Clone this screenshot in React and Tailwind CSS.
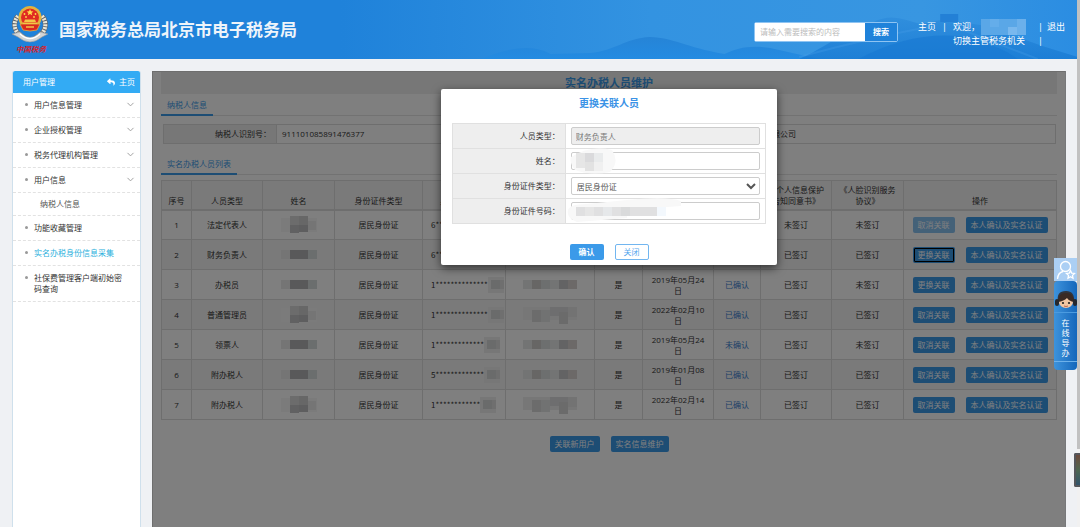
import React, { useState } from 'react';
import { ChevronDown } from 'lucide-react';
import { FaReply } from 'react-icons/fa';

const menuItems = [
  { label: '用户信息管理', expandable: true },
  { label: '企业授权管理', expandable: true },
  { label: '税务代理机构管理', expandable: true },
  { label: '用户信息', expandable: true },
  { label: '纳税人信息', child: true },
  { label: '功能收藏管理' },
  { label: '实名办税身份信息采集', active: true },
  { label: '社保费管理客户端初始密码查询' },
];

// Masked areas: [x, y, width, height, colour]
const nameBar = [
  [0, 4, 9, 9, '#eaeaea'], [9, 4, 18, 9, '#b2b2b4'], [27, 4, 9, 9, '#d6dcdc'],
];
const nameBlock = [
  [0, 2, 36, 14, '#f6f6f6'], [9, 0, 9, 9, '#d8d8d8'], [18, 0, 9, 9, '#cecece'],
  [9, 9, 9, 8, '#c2c2c4'], [18, 9, 9, 7, '#bdbdbf'], [27, 5, 8, 9, '#ebebeb'],
];
const idBlock = [
  [0, 1, 16, 16, '#eeeeee'], [3, 4, 9, 9, '#d4d6d6'], [12, 4, 4, 9, '#dedede'],
];
const phoneBar = [
  [0, 4, 54, 9, '#e6e8e8'], [9, 4, 9, 9, '#cfcdcb'], [18, 4, 9, 9, '#dadfdf'],
  [36, 4, 9, 9, '#c6c6c8'], [45, 4, 9, 9, '#d8d3d1'],
];
const phoneBlock = [
  [0, 1, 54, 13, '#efefef'], [9, 4, 9, 12, '#d9d9d9'], [18, 4, 9, 12, '#e3e5e5'],
  [27, 1, 18, 9, '#dcdcde'], [36, 6, 9, 12, '#d6d6d6'], [45, 1, 9, 10, '#e6e6e6'],
];

const people = [
  { type: '法定代表人', name: nameBlock, id: '6**************', phone: phoneBar, date: '2019年05月24日', status: '已确认', info: '未签订', face: '未签订', action: '取消关联', disabled: true },
  { type: '财务负责人', name: nameBar, id: '6**************', phone: phoneBar, date: '2019年05月24日', status: '已确认', info: '已签订', face: '已签订', action: '更换关联', focused: true },
  { type: '办税员', name: nameBar, id: '1**************', phone: phoneBar, date: '2019年05月24日', status: '已确认', info: '已签订', face: '未签订', action: '更换关联' },
  { type: '普通管理员', name: nameBlock, id: '1**************', phone: phoneBlock, date: '2022年02月10日', status: '已确认', info: '已签订', face: '已签订', action: '取消关联' },
  { type: '领票人', name: nameBar, id: '1*************', phone: phoneBar, date: '2019年05月24日', status: '未确认', info: '已签订', face: '未签订', action: '取消关联' },
  { type: '附办税人', name: nameBar, id: '5*************', phone: phoneBar, date: '2019年01月08日', status: '已确认', info: '已签订', face: '已签订', action: '取消关联' },
  { type: '附办税人', name: nameBlock, id: '1************', phone: phoneBlock, date: '2022年02月14日', status: '已确认', info: '已签订', face: '已签订', action: '取消关联' },
];

const Mosaic = ({ cells, width }) => (
  <svg width={width} height="18" viewBox={`0 0 ${width} 18`} className="shrink-0" aria-hidden="true">
    {cells.map(([x, y, w, h, fill], i) => (
      <rect key={i} x={x} y={y} width={w} height={h} fill={fill} />
    ))}
  </svg>
);

const Emblem = () => (
  <svg width="38" height="50" viewBox="0 0 38 50" className="shrink-0" aria-hidden="true">
    {/* wheat wreath */}
    <path d="M7 11 C1 18 3 29 14 33" fill="none" stroke="#61656a" strokeWidth="5" />
    <path d="M31 11 C37 18 35 29 24 33" fill="none" stroke="#61656a" strokeWidth="5" />
    <path d="M7 11 C1 18 3 29 14 33" fill="none" stroke="#e9e6d8" strokeWidth="4" strokeDasharray="2 1" />
    <path d="M31 11 C37 18 35 29 24 33" fill="none" stroke="#e9e6d8" strokeWidth="4" strokeDasharray="2 1" />
    <path d="M1 29 L9 27 Q19 38 29 27 L37 29 L31 32 Q25 37 19 37 Q13 37 7 32 Z" fill="#d3d5d6" stroke="#8d9499" strokeWidth=".6" />
    <path d="M9 29 Q19 38 29 29" fill="none" stroke="#fff" strokeWidth="1.2" />
    {/* national emblem */}
    <circle cx="19" cy="12.500" r="11.500" fill="#e3b33d" />
    <circle cx="19" cy="12.500" r="9" fill="#e02a22" />
    <path d="M9 19 H29 L26 25 Q19 27 12 25 Z" fill="#d9271f" stroke="#e3b33d" strokeWidth=".8" />
    <path d="M19 4 l1 2.200 2.400 .2 -1.800 1.500 .6 2.300 -2.200 -1.300 -2.200 1.300 .6 -2.300 -1.800 -1.500 2.400 -.2 Z" fill="#ffd84a" />
    <circle cx="13.500" cy="9" r=".9" fill="#ffd84a" />
    <circle cx="15" cy="12" r=".9" fill="#ffd84a" />
    <circle cx="24.500" cy="9" r=".9" fill="#ffd84a" />
    <circle cx="23" cy="12" r=".9" fill="#ffd84a" />
    <path d="M13 17 H25 L24 14.500 H14 Z M12 17.500 H26 V19 H12 Z" fill="#f2c547" />
    <path d="M15 22 H23" stroke="#f2c547" strokeWidth="1.500" />
    <text x="5" y="47" fontSize="7.500" fontStyle="italic" fontWeight="700" fill="#d8232a" fontFamily="Noto Sans CJK SC, sans-serif">中国税务</text>
  </svg>
);

const HeaderScenery = () => (
  <svg viewBox="0 0 780 59" preserveAspectRatio="none" className="absolute inset-y-0 right-0 h-full w-[72%]" aria-hidden="true">
    <defs>
      <linearGradient id="sky" x1="0" x2="1">
        <stop offset="0.050" stopColor="#1f82da" />
        <stop offset="0.450" stopColor="#3393e1" />
        <stop offset="0.800" stopColor="#3896e1" />
        <stop offset="1" stopColor="#2b8de2" />
      </linearGradient>
      <linearGradient id="hill" x1="0" x2="0" y1="0" y2="1">
        <stop offset="0" stopColor="#2684d7" />
        <stop offset="1" stopColor="#238be2" />
      </linearGradient>
      <linearGradient id="mount" x1="0" x2="0" y1="0" y2="1">
        <stop offset="0" stopColor="#308edd" />
        <stop offset="1" stopColor="#187ad3" />
      </linearGradient>
    </defs>
    <rect width="780" height="59" fill="url(#sky)" />
    <path d="M180 59 Q225 40 250 54 L290 53 C315 51 325 38 350 37 C375 38 385 47 425 54 C440 47 455 44 480 50 L520 59 Z" fill="url(#hill)" />
    <path d="M500 59 C530 46 545 30 575 22 Q590 14 608 20 L622 24 L642 20 V14 H660 V22 L690 26 Q735 44 780 57 V59 Z" fill="url(#mount)" opacity=".8" />
    <path d="M642 14 H660 V22 H642 Z" fill="#2380d6" />
    <path d="M500 57 Q570 38 630 27 M660 28 Q690 40 740 59" fill="none" stroke="#4aa0e8" strokeWidth="2" opacity=".3" />
    <path d="M560 59 Q610 32 660 36 Q700 44 720 59 Z" fill="#1878d2" opacity=".6" />
  </svg>
);

const Header = () => (
  <header className="relative flex h-[59px] items-center bg-[#1f82da] pr-3 pl-[11px] text-white">
    <HeaderScenery />
    <div className="relative flex items-center gap-[10px]">
      <Emblem />
      <h1 className="text-[17px] leading-6 font-bold text-[#eef4fa]">国家税务总局北京市电子税务局</h1>
    </div>
    <form className="relative mt-1 ml-auto flex h-5 w-[144px] rounded-xs border border-[#8fc4f2]" onSubmit={(e) => e.preventDefault()}>
      <input
        type="text"
        aria-label="搜索内容"
        placeholder="请输入需要搜索的内容"
        className="min-w-0 flex-1 bg-white px-[5px] text-[8px] text-gray-700 outline-none placeholder:text-[#bbb]"
      />
      <button type="submit" className="w-8 bg-[#1f82da] text-[8px] font-bold">搜索</button>
    </form>
    <nav className="relative mt-2 ml-5 flex gap-[6px] text-[9px] leading-[14px]">
      <a href="#home">主页</a>
      <span>|</span>
      <div>
        <div className="flex h-[14px] items-center gap-px">
          欢迎，
          <svg width="45" height="16" viewBox="0 0 45 16" aria-hidden="true">
            <rect width="45" height="16" fill="#5aa7e7" />
            <rect x="9" width="9" height="8" fill="#64adea" />
            <rect x="27" y="8" width="9" height="8" fill="#79b8ee" />
            <rect x="36" width="9" height="16" fill="#6bb0eb" />
          </svg>
        </div>
        <a href="#switch" className="block">切换主管税务机关</a>
      </div>
      <div className="ml-[6px] grid grid-cols-[auto_auto] gap-x-1">
        <span>|</span>
        <a href="#logout">退出</a>
        <span>|</span>
      </div>
    </nav>
  </header>
);

const Sidebar = () => (
  <aside className="w-[129px] shrink-0 rounded-t-xs border-x border-[#cfe0ec] bg-white text-[8px]">
    <div className="flex h-[22px] items-center justify-between rounded-t-xs bg-[#33abf4] pr-[5px] pl-[10px] text-white">
      <span>用户管理</span>
      <a href="#home" className="flex items-center gap-1">
        <FaReply size={8} /> 主页
      </a>
    </div>
    <ul className="leading-[11px] text-[#333]">
      {menuItems.map((item) => (
        <li key={item.label} className="border-b border-dashed border-[#e2e2e2]">
          {item.child ? (
            <a href="#menu" className="block pt-[5px] pb-[6px] pl-[27px] text-[#555]">{item.label}</a>
          ) : (
            <a href="#menu" className={`flex py-[6px] pr-1 pl-3 ${item.active ? 'text-[#2bb0dd]' : ''}`}>
              <span className="mt-1 mr-[6px] size-[3px] shrink-0 rounded-full bg-[#999]" />
              <span className="flex-1 pr-2 pb-px">{item.label}</span>
              {item.expandable && <ChevronDown size={11} strokeWidth={2} className="text-[#999]" />}
            </a>
          )}
        </li>
      ))}
    </ul>
  </aside>
);

const Button = ({ children, className = '', ...props }) => (
  <button type="button" className={`h-4 rounded-xs bg-[#3b9ae9] px-[5px] text-[8px] leading-4 whitespace-nowrap text-white ${className}`} {...props}>
    {children}
  </button>
);

const SectionTab = ({ children }) => (
  <div className="flex h-[22px] border-b border-[#e4e4e4]">
    <h3 className="-mb-px border-b-2 border-[#3b9ae9] px-[6px] text-[8px] leading-[22px] text-[#3b9ae9]">{children}</h3>
  </div>
);

const TaxpayerTable = () => (
  <table className="w-full table-fixed border-collapse text-left text-[8px] leading-[18px] text-[#333]">
    <colgroup>
      <col className="w-[113px]" />
      <col className="w-[332px]" />
      <col className="w-[110px]" />
      <col className="w-[337px]" />
    </colgroup>
    <tbody>
      <tr>
        <th className="border border-[#dcdcdc] bg-[#eee] pr-[5px] text-right font-normal">纳税人识别号：</th>
        <td className="border border-[#dcdcdc] pl-[5px]">911101085891476377</td>
        <th className="border border-[#dcdcdc] bg-[#eee] pr-[5px] text-right font-normal">纳税人名称：</th>
        <td className="border border-[#dcdcdc] pl-[5px]">北京市某某有限公司</td>
      </tr>
    </tbody>
  </table>
);

const headings = ['序号', '人员类型', '姓名', '身份证件类型', '身份证件号码', '手机号码', '是否有效', '有效期起', '确认状态', '《个人信息保护告知同意书》', '《人脸识别服务协议》', '操作'];

const PeopleTable = ({ onReplace }) => (
  <table className="w-full table-fixed border-collapse text-center text-[8px] leading-[11px] text-[#333]">
    <colgroup>
      <col className="w-[30px]" />
      <col className="w-[71px]" />
      <col className="w-[72px]" />
      <col className="w-[88px]" />
      <col className="w-[83px]" />
      <col className="w-[89px]" />
      <col className="w-[48px]" />
      <col className="w-[71px]" />
      <col className="w-[47px]" />
      <col className="w-[71px]" />
      <col className="w-[72px]" />
      <col className="w-[153px]" />
    </colgroup>
    <thead>
      <tr className="h-[29px] bg-[#f5f5f5]">
        {headings.map((h) => (
          <th key={h} className="border border-b-2 border-[#ddd] px-[6px] pb-[3px] align-bottom font-normal first:px-0">{h}</th>
        ))}
      </tr>
    </thead>
    <tbody className="[&_td]:border [&_td]:border-[#ddd]">
      {people.map((p, i) => (
        <tr key={i} className="h-[30px] even:bg-[#f4f4f4]">
          <td>{i + 1}</td>
          <td>{p.type}</td>
          <td><div className="flex justify-center"><Mosaic cells={p.name} width={36} /></div></td>
          <td>居民身份证</td>
          <td>
            <div className="flex items-center overflow-hidden pl-2 font-['Noto_Sans_CJK_SC',sans-serif]">
              {p.id}
              <Mosaic cells={idBlock} width={16} />
            </div>
          </td>
          <td><div className="flex justify-center"><Mosaic cells={p.phone} width={54} /></div></td>
          <td>是</td>
          <td className="px-[6px]">{p.date}</td>
          <td className="text-[#3b7fd0]">{p.status}</td>
          <td>{p.info}</td>
          <td>{p.face}</td>
          <td>
            <div className="flex justify-center gap-[11px]">
              <Button
                disabled={p.disabled}
                onClick={onReplace}
                className={`${p.disabled ? 'opacity-60' : ''} ${p.focused ? 'outline-1 -outline-offset-2 outline-black' : ''}`}
              >
                {p.action}
              </Button>
              <Button>本人确认及实名认证</Button>
            </div>
          </td>
        </tr>
      ))}
    </tbody>
  </table>
);

const FormRow = ({ id, label, children }) => (
  <tr>
    <th className="w-[36%] border border-[#e0e0e0] bg-[#eee] pr-[5px] text-right font-normal">
      <label htmlFor={id}>{label}</label>
    </th>
    <td className="border border-[#e0e0e0] px-[5px] py-[3px]">
      <div className="relative flex">{children}</div>
    </td>
  </tr>
);

const field = 'h-[18px] w-full rounded-xs border border-[#ccc] text-[8px] text-[#555]';

const ReplaceDialog = ({ onClose }) => (
  <div role="dialog" aria-labelledby="dialog-title" className="w-[336px] rounded-xs bg-white px-[11px] pt-[7px] pb-[5px] shadow-[0_3px_10px_rgba(0,0,0,0.6)]">
    <h2 id="dialog-title" className="text-center text-[10px] leading-[14px] font-bold text-[#3b93e6]">更换关联人员</h2>
    <table className="mt-[13px] w-full border-collapse text-[8px] text-[#333]">
      <tbody>
        <FormRow id="person-type" label="人员类型：">
          <input id="person-type" type="text" disabled defaultValue="财务负责人" className={`${field} bg-[#eee] px-1 text-[#777]`} />
        </FormRow>
        <FormRow id="person-name" label="姓名：">
          <input id="person-name" type="text" className={`${field} px-1`} />
          <svg width="48" height="26" viewBox="0 0 48 26" className="absolute -top-1 -left-px" aria-hidden="true">
            <path d="M1 9 Q20 -3 42 2 Q50 14 40 24 Q20 28 5 22 Q-1 14 1 9 Z" fill="#f8f8f8" />
            <rect x="6" y="5" width="9" height="15" fill="#e6e6e6" />
            <rect x="15" y="5" width="9" height="9" fill="#dadadc" />
            <rect x="15" y="14" width="9" height="9" fill="#e2e2e2" />
            <rect x="24" y="5" width="9" height="9" fill="#e9ebec" />
            <rect x="24" y="14" width="9" height="9" fill="#f0f0f0" />
          </svg>
        </FormRow>
        <FormRow id="id-type" label="身份证件类型：">
          <select id="id-type" className={`${field} bg-white px-px`}>
            <option>居民身份证</option>
          </select>
        </FormRow>
        <FormRow id="id-number" label="身份证件号码：">
          <input id="id-number" type="text" className={`${field} px-1`} />
          <svg width="116" height="26" viewBox="0 0 116 26" className="absolute -top-1 -left-1" aria-hidden="true">
            <path d="M1 12 Q3 6 20 6 L60 2 Q100 -2 114 3 V8 L60 12 V20 L10 24 Q-1 20 1 12 Z" fill="#f8f8f8" />
            <rect x="9" y="9" width="81" height="9" fill="#e0e0e1" />
            <rect x="18" y="9" width="9" height="9" fill="#e6e6e6" />
            <rect x="36" y="9" width="9" height="9" fill="#e6e8ea" />
            <rect x="54" y="9" width="9" height="9" fill="#d9dadb" />
            <rect x="90" y="9" width="9" height="9" fill="#f3f8fd" />
          </svg>
        </FormRow>
      </tbody>
    </table>
    <div className="mt-5 flex justify-center gap-[11px]">
      <button type="button" onClick={onClose} className="h-4 w-[34px] rounded-xs bg-[#3b9ae9] text-[8px] font-bold text-white">确认</button>
      <button type="button" onClick={onClose} className="h-4 w-[34px] rounded-xs border border-[#72b6f0] bg-white text-[8px] text-[#55a7ee]">关闭</button>
    </div>
  </div>
);

const GuideWidget = () => (
  <div className="absolute top-[258px] right-[3px] w-[23px]">
    <button type="button" aria-label="个人收藏" className="flex h-[23px] w-full items-center justify-center bg-[#abcff4]">
      <svg width="20" height="20" viewBox="0 0 20 20" fill="none" stroke="#fff" strokeWidth="1.300">
        <circle cx="9.500" cy="6.500" r="5" />
        <path d="M1.500 19 Q2 12.500 7 11.500" />
        <path d="M14.500 10.500 l1.200 2.600 2.800 .3 -2 2 .5 2.800 -2.500 -1.400 -2.500 1.400 .5 -2.800 -2 -2 2.800 -.3 Z" />
      </svg>
    </button>
    <a href="#guide" className="flex flex-col items-center rounded-sm bg-linear-to-r from-[#3d93dc] to-[#1467bb] pt-2 pb-2 text-[8px] leading-[10px] text-white">
      <svg width="23" height="22" viewBox="0 0 23 22" aria-hidden="true">
        <path d="M4 13 Q2 2 12 2 Q21 2 20 13" fill="#31343c" />
        <ellipse cx="12" cy="13" rx="7" ry="6" fill="#f2c6a2" />
        <path d="M4 13 Q4 4 12 4 Q20 4 20 13 Q15 12 13 9 Q10 12 4 13 Z" fill="#3a2a24" />
        <circle cx="9" cy="14" r="1.100" fill="#222" />
        <circle cx="15" cy="14" r="1.100" fill="#222" />
        <path d="M10 17 Q12 18 14 17" stroke="#b04a3a" strokeWidth=".8" fill="none" />
        <rect x="1" y="10" width="4" height="7" rx="2" fill="#24272e" />
        <rect x="19" y="10" width="4" height="7" rx="2" fill="#24272e" />
      </svg>
      <span className="mt-px mb-[5px] w-full border-t border-[#4b9be0]" />
      <span>在</span>
      <span>线</span>
      <span>导</span>
      <span>办</span>
      <span className="mt-[3px] w-full border-t border-[#6db1ea]" />
    </a>
  </div>
);

export default function App() {
  const [dialogOpen, setDialogOpen] = useState(true);

  return (
    <div lang="zh-CN" className="relative flex min-h-screen bg-[#eff1f4] font-['Open_Sans','Noto_Sans_CJK_SC',sans-serif]">
      <div className="flex min-w-0 flex-1 flex-col">
        <Header />
        <div className="flex flex-1 gap-[11px] pt-3 pr-3 pl-3">
          <Sidebar />
          <main className="relative min-w-0 flex-1 border-t border-l border-[#ddd] bg-white px-2">
            <h2 className="bg-[#eee] text-center text-[11px] leading-[22px] font-bold text-[#3b9ae9]">实名办税人员维护</h2>
            <SectionTab>纳税人信息</SectionTab>
            <div className="px-[2px] pt-2 pb-[9px]">
              <TaxpayerTable />
            </div>
            <SectionTab>实名办税人员列表</SectionTab>
            <div className="pt-[5px]">
              <PeopleTable onReplace={() => setDialogOpen(true)} />
            </div>
            <div className="mt-4 flex justify-center gap-[11px]">
              <Button>关联新用户</Button>
              <Button>实名信息维护</Button>
            </div>

            {/* 遮罩层 */}
            {dialogOpen && (
              <div className="absolute -inset-px bottom-0 flex items-start justify-center bg-black/50 pt-[18px]">
                <ReplaceDialog onClose={() => setDialogOpen(false)} />
              </div>
            )}
          </main>
        </div>
      </div>
      <div className="w-[3px] shrink-0 bg-[#f1f1f1]">
        <div className="h-[449px] bg-[#c1c1c1]" />
      </div>
      <GuideWidget />
      <div className="absolute top-[453px] right-0 h-[34px] w-[6px] rounded-l-xs border-2 border-r-0 border-[#55575b] bg-linear-to-b from-[#6b4a3c] via-[#4d6650] to-[#32546b]" />
    </div>
  );
}
